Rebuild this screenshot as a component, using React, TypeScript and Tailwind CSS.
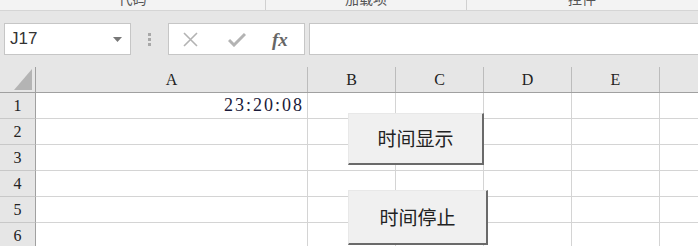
import React from 'react';

const cols = [
  { name: 'A', w: 272 },
  { name: 'B', w: 88 },
  { name: 'C', w: 88 },
  { name: 'D', w: 88 },
  { name: 'E', w: 88 },
];

const rows = [1, 2, 3, 4, 5, 6];

const serif = { fontFamily: '"Liberation Serif", "Noto Sans CJK SC", serif' };
const cjk = { fontFamily: '"Noto Sans CJK SC", "Liberation Sans", sans-serif' };

function RibbonStrip() {
  return (
    <div className="flex h-[11px] bg-[#f3f3f3] border-b border-[#d5d5d5] overflow-hidden text-[14px] text-[#555]" style={cjk}>
      <div className="w-[266px] flex justify-center border-r border-[#d0d0d0]">
        <span className="-mt-[12px] leading-[20px]">代码</span>
      </div>
      <div className="w-[201px] flex justify-center border-r border-[#d0d0d0]">
        <span className="-mt-[12px] leading-[20px]">加载项</span>
      </div>
      <div className="w-[230px] flex justify-center">
        <span className="-mt-[12px] leading-[20px]">控件</span>
      </div>
    </div>
  );
}

function FormulaBar() {
  return (
    <div className="flex h-[32px] mt-[12px] items-stretch">
      <div className="ml-[4px] w-[127px] bg-white border border-[#c6c6c6] flex items-center justify-between pl-[5px] pr-[8px]">
        <span className="text-[17px] text-[#333]" style={{ fontFamily: '"Liberation Sans", sans-serif' }}>J17</span>
        <svg width="9" height="5" viewBox="0 0 9 5"><path d="M0 0h9L4.5 5z" fill="#777" /></svg>
      </div>
      <div className="w-[37px] flex flex-col items-center justify-center gap-[2px]">
        <div className="w-[3px] h-[3px] bg-[#a8a8a8]" />
        <div className="w-[3px] h-[3px] bg-[#a8a8a8]" />
        <div className="w-[3px] h-[3px] bg-[#a8a8a8]" />
      </div>
      <div className="w-[137px] bg-white border border-[#c6c6c6] flex items-center">
        <svg className="ml-[14px]" width="15" height="15" viewBox="0 0 15 15">
          <path d="M1 1L14 14M14 1L1 14" stroke="#b3b3b3" strokeWidth="1.6" fill="none" />
        </svg>
        <svg className="ml-[30px]" width="18" height="15" viewBox="0 0 18 15">
          <path d="M1 8L6 13L17 2" stroke="#b3b3b3" strokeWidth="3" fill="none" />
        </svg>
        <span className="ml-[26px] text-[19px] italic font-bold text-[#666] leading-none" style={serif}>fx</span>
      </div>
      <div className="ml-[4px] flex-1 bg-white border-y border-l border-[#c6c6c6]" />
    </div>
  );
}

function Sheet() {
  return (
    <div className="relative pt-[12px]">
      <div className="flex h-[26px] border-b border-[#a0a0a0]">
        <div className="w-[36px] border-r border-[#a0a0a0] flex items-end justify-end pr-[3px] pb-[2px]">
          <svg width="18" height="21" viewBox="0 0 18 21"><path d="M18 0V21H0z" fill="#b4b4b4" /></svg>
        </div>
        {cols.map((c) => (
          <div
            key={c.name}
            className="border-r border-[#bcbcbc] flex items-center justify-center text-[16px] text-[#222]"
            style={{ ...serif, width: c.w }}
          >
            {c.name}
          </div>
        ))}
        <div className="flex-1" />
      </div>
      {rows.map((r) => (
        <div key={r} className="flex h-[26px] bg-white">
          <div className="w-[36px] bg-[#e6e6e6] border-r border-b border-r-[#a0a0a0] border-b-[#c8c8c8] flex items-center justify-center text-[16px] text-[#222]" style={serif}>
            {r}
          </div>
          {cols.map((c) => (
            <div
              key={c.name}
              className="border-r border-b border-[#d4d4d4] flex items-center justify-end pr-[3px] text-[18px] text-[#1a1a3a] tracking-[2px]"
              style={{ ...serif, width: c.w }}
            >
              {r === 1 && c.name === 'A' ? '23:20:08' : ''}
            </div>
          ))}
          <div className="flex-1 border-b border-[#d4d4d4]" />
        </div>
      ))}
      <button
        className="absolute left-[348px] top-[58px] w-[136px] h-[52px] bg-[#f0f0f0] border-t border-l border-[#e8e8e8] border-r-2 border-b-2 border-r-[#6a6a6a] border-b-[#6a6a6a] text-[19px] text-[#222] flex items-center justify-center"
        style={cjk}
      >
        时间显示
      </button>
      <button
        className="absolute left-[348px] top-[135px] w-[140px] h-[55px] bg-[#f0f0f0] border-t border-l border-[#e8e8e8] border-r-2 border-b-2 border-r-[#6a6a6a] border-b-[#6a6a6a] text-[19px] text-[#222] flex items-center justify-center"
        style={cjk}
      >
        时间停止
      </button>
    </div>
  );
}

export default function App() {
  return (
    <div className="w-[698px] h-[246px] overflow-hidden bg-[#e6e6e6]">
      <RibbonStrip />
      <FormulaBar />
      <Sheet />
    </div>
  );
}
